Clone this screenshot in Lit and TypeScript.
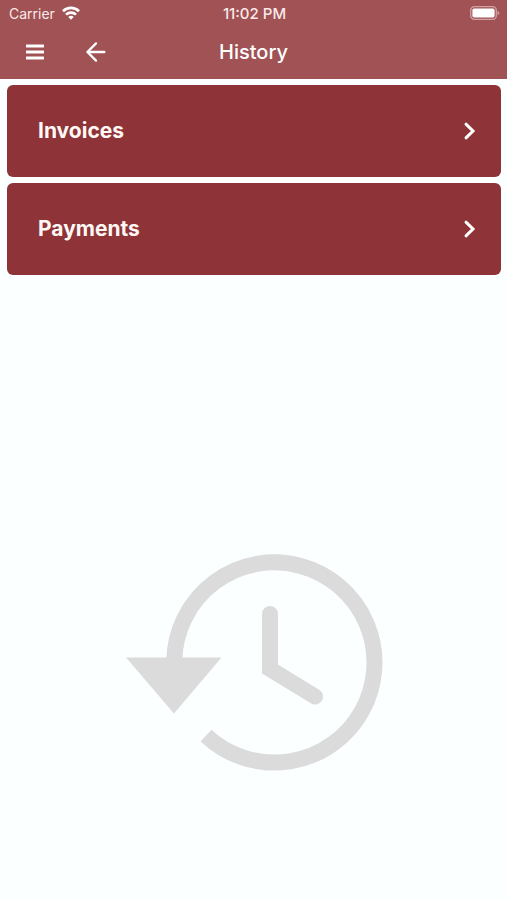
import { LitElement, html, css } from "lit";
import { customElement, property } from "lit/decorators.js";

@customElement("status-bar")
class StatusBar extends LitElement {
  static styles = css`
    :host {
      display: grid;
      grid-template-columns: 1fr auto 1fr;
      align-items: center;
      height: 28px;
      padding: 0 7px 0 9px;
      font-size: 14px;
      line-height: 20px;
      color: #fbe9e7;
    }
    .carrier {
      display: flex;
      align-items: center;
      gap: 7px;
    }
    .time {
      font-size: 15px;
      font-weight: 500;
    }
    .battery {
      justify-self: end;
    }
    svg {
      display: block;
      margin-bottom: 2px;
    }
  `;

  render() {
    return html`
      <div class="carrier">
        <span>Carrier</span>
        <svg width="18" height="14" viewBox="0 0 18 14" fill="none" stroke="#fff" stroke-width="2.6" aria-hidden="true">
          <path d="M1 5.2a11.4 11.4 0 0 1 16 0" />
          <path d="M4 8.6a7.2 7.2 0 0 1 10 0" />
          <path d="M9 13.8 6.3 11a3.8 3.8 0 0 1 5.4 0z" fill="#fff" stroke="none" />
        </svg>
      </div>
      <span class="time">11:02 PM</span>
      <svg class="battery" width="30" height="14" viewBox="0 0 30 14" aria-hidden="true">
        <rect x="0.7" y="0.7" width="25.6" height="12.6" rx="3.6" fill="none" stroke="#d0a2a4" stroke-width="1.3" />
        <rect x="2.4" y="2.4" width="22.2" height="9.2" rx="1.8" fill="#fff" />
        <path d="M27.6 4.8v4.4q1.8-.7 1.8-2.2t-1.8-2.2z" fill="#d0a2a4" />
      </svg>
    `;
  }
}

@customElement("nav-bar")
class NavBar extends LitElement {
  @property() heading = "";

  static styles = css`
    :host {
      display: grid;
      grid-template-columns: 1fr auto 1fr;
      align-items: center;
      height: 51px;
      padding: 0 20px;
      box-sizing: border-box;
    }
    .actions {
      display: flex;
      gap: 32px;
      padding-bottom: 4px;
    }
    button {
      display: grid;
      place-items: center;
      width: 29px;
      height: 32px;
      padding: 0;
      border: 0;
      background: none;
      cursor: pointer;
    }
    h1 {
      margin: 0;
      padding-bottom: 4px;
      font-size: 20px;
      line-height: 24px;
      font-weight: 500;
    }
  `;

  render() {
    return html`
      <div class="actions">
        <button type="button" aria-label="Menu">
          <svg width="20" height="18" viewBox="0 0 20 18" fill="#fff">
            <rect x="1" y="1.4" width="18" height="3.2" rx="0.6" />
            <rect x="1" y="7.4" width="18" height="3.2" rx="0.6" />
            <rect x="1" y="13.4" width="18" height="3.2" rx="0.6" />
          </svg>
        </button>
        <button type="button" aria-label="Back">
          <svg width="22" height="22" viewBox="0 0 22 22" fill="none" stroke="#fff" stroke-width="2.3" stroke-linecap="round" stroke-linejoin="round">
            <path d="M19.4 11H2.4M11 2.4 2.4 11l8.6 8.6" />
          </svg>
        </button>
      </div>
      <h1>${this.heading}</h1>
    `;
  }
}

@customElement("app-root")
class AppRoot extends LitElement {
  static styles = css`
    :host {
      display: flex;
      flex-direction: column;
      min-height: 100vh;
      background: #fbffff;
      color: #fff;
      font-family: Inter, "Liberation Sans", sans-serif;
    }
    header {
      background: #a05255;
    }
    main {
      padding: 6px 6px 0 7px;
    }
    nav {
      display: flex;
      flex-direction: column;
      gap: 6px;
    }
    a {
      display: flex;
      align-items: center;
      justify-content: space-between;
      height: 92px;
      padding: 0 25px 0 31px;
      box-sizing: border-box;
      border-radius: 6px;
      background: #8e3337;
      color: #fff8f5;
      font-size: 21px;
      line-height: 28px;
      font-weight: 700;
      text-decoration: none;
    }
    .backdrop {
      display: flex;
      justify-content: center;
      padding-top: 278px;
    }
  `;

  render() {
    return html`
      <header>
        <status-bar></status-bar>
        <nav-bar heading="History"></nav-bar>
      </header>
      <main>
        <nav aria-label="History">
          ${["Invoices", "Payments"].map(
            (label) => html`
              <a href="#${label.toLowerCase()}">
                <span>${label}</span>
                <svg width="14" height="20" viewBox="0 0 14 20" fill="none" stroke="#fff" stroke-width="3" stroke-linecap="round" aria-hidden="true">
                  <path d="M4 3.2 11 10l-7 6.8" />
                </svg>
              </a>
            `
          )}
        </nav>
        <div class="backdrop">
          <svg width="258" height="218" viewBox="125 553 258 218" fill="none" stroke="#dbdbdb" stroke-width="16" aria-hidden="true">
            <path d="M174.3 660A100.1 100.1 0 1 1 206 735.6" />
            <path d="M126 657.5h95.5L174 713.5z" fill="#dbdbdb" stroke="none" />
            <path d="M270 614v55l45 27.5" stroke-linecap="round" />
          </svg>
        </div>
      </main>
    `;
  }
}
